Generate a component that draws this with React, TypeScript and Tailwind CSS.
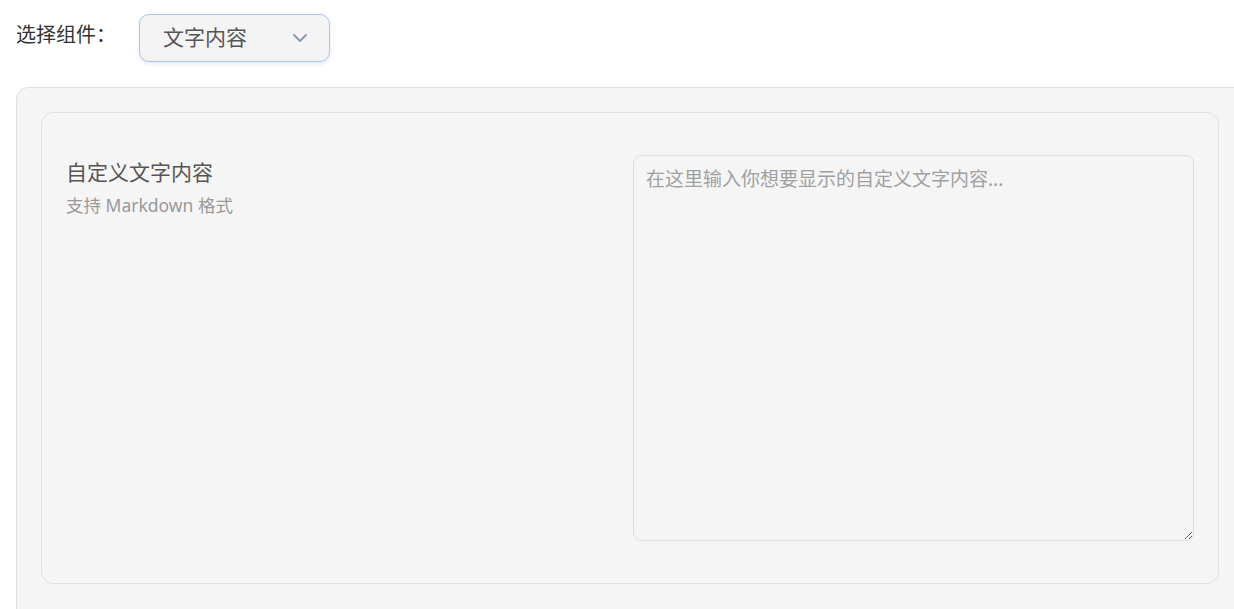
import React from 'react';

const font = { fontFamily: '"Noto Sans", "Noto Sans CJK SC", sans-serif' };

function ComponentSelect() {
  return (
    <button
      type="button"
      className="flex h-[48px] w-[191px] items-center justify-between rounded-[10px] border border-[#a9c3f2] bg-[#f4f4f5] pl-[23px] pr-[17px] text-[21px] text-[#555] shadow-[0_2px_4px_rgba(80,110,170,0.15)]"
    >
      <span>文字内容</span>
      <svg width="24" height="24" viewBox="0 0 24 24" fill="none" stroke="#8797b2" strokeWidth="1.8" strokeLinecap="round" strokeLinejoin="round">
        <path d="M6 9l6 6 6-6" />
      </svg>
    </button>
  );
}

export default function App() {
  return (
    <div className="h-screen w-screen overflow-hidden bg-white" style={font}>
      <div className="flex items-start gap-[23px] pl-[16px] pt-[14px]">
        <span className="mt-[6px] text-[20px] text-[#333]">选择组件：</span>
        <ComponentSelect />
      </div>

      <div className="ml-[16px] mt-[25px] w-[1228px] rounded-tl-[12px] border border-[#e0e0e0] bg-[#f5f5f5] px-[24px] pb-[40px] pt-[24px]">
        <div className="grid grid-cols-2 gap-[6px] rounded-[12px] border border-[#e2e2e2] bg-[#f5f5f5] px-[24px] py-[42px]">
          <div className="pt-[2px]">
            <div className="text-[21px] leading-[30px] text-[#555]">自定义文字内容</div>
            <div className="mt-[6px] text-[17.5px] leading-[24px] text-[#999]">支持 Markdown 格式</div>
          </div>
          <textarea
            placeholder="在这里输入你想要显示的自定义文字内容..."
            className="h-[386px] w-full rounded-[8px] border border-[#dedede] bg-[#f5f5f5] px-[12px] py-[10px] text-[19px] leading-[27px] text-[#444] outline-none placeholder:text-[#a0a0a0]"
          />
        </div>
      </div>
    </div>
  );
}
